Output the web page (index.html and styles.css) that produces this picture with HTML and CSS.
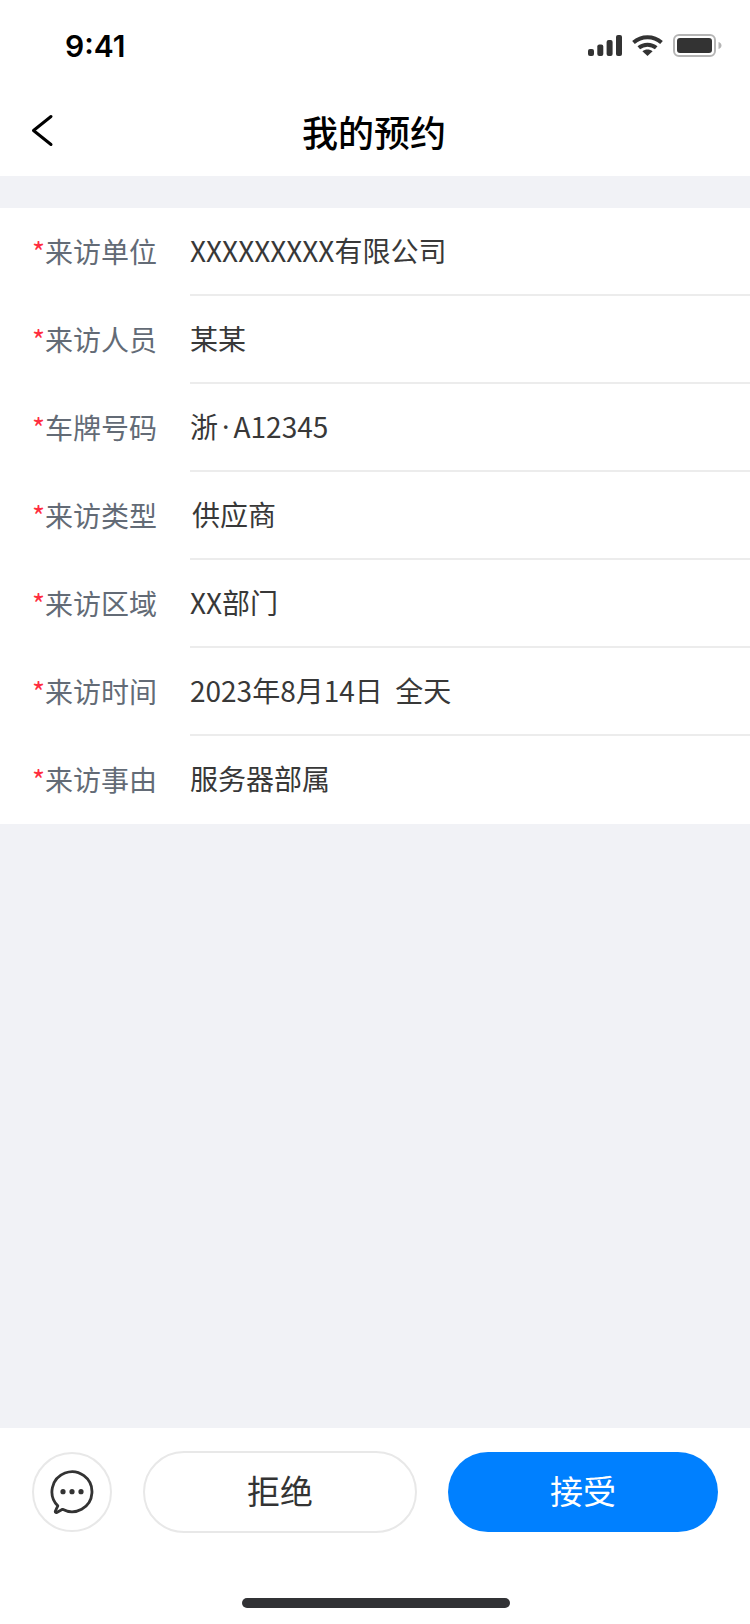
FILE: index.html
```html
<!DOCTYPE html>
<html lang="zh-CN">
<head>
    <meta charset="UTF-8">
    <meta name="viewport" content="width=device-width, initial-scale=1.0">
    <title>我的预约</title>
    <link rel="stylesheet" href="styles.css">
</head>
<body>

    <div class="page">
        <div class="status-bar">
            <span class="time">9:41</span>
            <div class="status-icons">
                <svg class="icon-signal" width="34" height="21" viewBox="0 0 34 21">
                    <rect x="0" y="14" width="6" height="7" rx="2"/>
                    <rect x="9.3" y="9.5" width="6" height="11.5" rx="2"/>
                    <rect x="18.6" y="5" width="6" height="16" rx="2"/>
                    <rect x="28" y="0" width="6" height="21" rx="2"/>
                </svg>
                <svg class="icon-wifi" width="31" height="21" viewBox="0 0 31 21">
                    <path d="M1.5 7.5C9.5 0.4 21.5 0.4 29.5 7.5" fill="none" stroke="#333" stroke-width="4"/>
                    <path d="M6.8 12.8C11.8 8.6 19.2 8.6 24.2 12.8" fill="none" stroke="#333" stroke-width="4"/>
                    <path d="M10.4 16.2C13.4 13.8 17.6 13.8 20.6 16.2L15.5 21Z" fill="#333"/>
                </svg>
                <svg class="icon-battery" width="49" height="23" viewBox="0 0 49 23">
                    <rect x="1" y="1" width="41" height="21" rx="5" fill="none" stroke="#b5b5b5" stroke-width="2"/>
                    <rect x="4" y="4" width="35" height="15" rx="3" fill="#333"/>
                    <path d="M45.5 8C47.2 8.5 48.5 9.8 48.5 11.5C48.5 13.2 47.2 14.5 45.5 15Z" fill="#b5b5b5"/>
                </svg>
            </div>
        </div>

        <div class="nav-bar">
            <svg class="back" width="26" height="34" viewBox="0 0 26 34">
                <path d="M21 2.5L3.5 16.5L21 30.5" fill="none" stroke="#000" stroke-width="3" stroke-linecap="round" stroke-linejoin="round"/>
            </svg>
            <h1 class="title">我的预约</h1>
        </div>

        <div class="content">
            <div class="form">
                <div class="row">
                    <div class="label"><span class="star">*</span>来访单位</div>
                    <div class="value">XXXXXXXXX有限公司</div>
                </div>
                <div class="row">
                    <div class="label"><span class="star">*</span>来访人员</div>
                    <div class="value">某某</div>
                </div>
                <div class="row">
                    <div class="label"><span class="star">*</span>车牌号码</div>
                    <div class="value">浙<span class="dot">·</span>A12345</div>
                </div>
                <div class="row">
                    <div class="label"><span class="star">*</span>来访类型</div>
                    <div class="value value-indent">供应商</div>
                </div>
                <div class="row">
                    <div class="label"><span class="star">*</span>来访区域</div>
                    <div class="value">XX部门</div>
                </div>
                <div class="row">
                    <div class="label"><span class="star">*</span>来访时间</div>
                    <div class="value">2023年8月14日&nbsp;&nbsp;全天</div>
                </div>
                <div class="row">
                    <div class="label"><span class="star">*</span>来访事由</div>
                    <div class="value">服务器部属</div>
                </div>
            </div>
        </div>

        <div class="footer">
            <div class="actions">
                <button class="chat" type="button">
                    <svg width="46" height="46" viewBox="0 0 46 46">
                        <path d="M13.5 40.3A20 20 0 1 0 8.8 36.8L6.4 42C6 43.2 6.8 43.8 7.8 43.4Z" fill="none" stroke="#333" stroke-width="2.8" stroke-linejoin="round"/>
                        <circle cx="14" cy="22.7" r="2.6" fill="#333"/>
                        <circle cx="23" cy="22.7" r="2.6" fill="#333"/>
                        <circle cx="32" cy="22.7" r="2.6" fill="#333"/>
                    </svg>
                </button>
                <button class="btn btn-reject" type="button">拒绝</button>
                <button class="btn btn-accept" type="button">接受</button>
            </div>
            <div class="home-indicator"></div>
        </div>
    </div>

</body>
</html>
```

FILE: styles.css
```css
* {
    box-sizing: border-box;
}

body {
    margin: 0;
    font-family: "Noto Sans CJK SC", "Noto Sans", sans-serif;
    background-color: #fff;
}

.page {
    display: flex;
    flex-direction: column;
    width: 750px;
    height: 1624px;
    overflow: hidden;
}

.status-bar {
    display: flex;
    justify-content: space-between;
    align-items: center;
    height: 88px;
    padding: 3px 28px 0 65px;
    flex-shrink: 0;
}

.time {
    font-family: Inter, "Liberation Sans", sans-serif;
    font-size: 30px;
    font-weight: 600;
    color: #000;
}

.status-icons {
    display: flex;
    align-items: center;
    gap: 10px;
}

.icon-signal {
    fill: #333;
}

.nav-bar {
    position: relative;
    display: flex;
    justify-content: center;
    align-items: center;
    height: 88px;
    padding: 0 2px 2px 0;
    flex-shrink: 0;
}

.back {
    position: absolute;
    left: 30px;
    top: 26px;
}

.title {
    margin: 0;
    font-size: 36px;
    font-weight: 500;
    color: #000;
}

.content {
    flex: 1;
    padding-top: 32px;
    background-color: #f1f2f6;
}

.form {
    background-color: #fff;
}

.row {
    display: flex;
    height: 88px;
}

.label {
    display: flex;
    align-items: center;
    width: 190px;
    padding: 0 0 3px 32px;
    font-size: 28px;
    color: #636b76;
    flex-shrink: 0;
}

.star {
    color: #ff2d40;
}

.value {
    flex: 1;
    display: flex;
    align-items: center;
    padding-bottom: 2px;
    font-size: 28px;
    color: #383838;
    border-bottom: 2px solid #ececec;
}

.row:last-child .value {
    border-bottom-color: transparent;
}

.value-indent {
    padding-left: 2px;
}

.dot {
    padding: 0 4px;
    font-family: "Noto Sans", sans-serif;
}

.footer {
    flex-shrink: 0;
    height: 196px;
    padding-top: 23px;
    background-color: #fff;
}

.actions {
    display: flex;
    align-items: center;
    gap: 31px;
    padding: 0 32px;
}

.chat {
    display: flex;
    justify-content: center;
    align-items: center;
    width: 80px;
    height: 80px;
    padding: 0;
    background: #fff;
    border: 2px solid #e8e8e8;
    border-radius: 50%;
    flex-shrink: 0;
}

.btn {
    flex: 1;
    padding: 0 0 4px;
    font-family: inherit;
    font-size: 33px;
}

.btn-reject {
    height: 82px;
    color: #333;
    background: #fff;
    border: 2px solid #e8e8e8;
    border-radius: 41px;
}

.btn-accept {
    height: 80px;
    color: #fff;
    background: #0080ff;
    border: none;
    border-radius: 40px;
}

.home-indicator {
    width: 268px;
    height: 10px;
    margin: 65px 0 0 242px;
    background-color: #313235;
    border-radius: 5px;
}
```
